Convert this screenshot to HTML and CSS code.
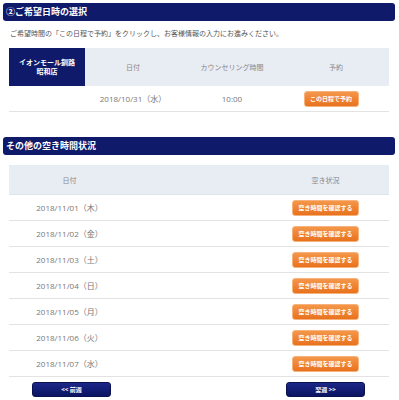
FILE: index.html
```html
<!DOCTYPE html>
<html lang="ja">
    <head>
        <meta charset="UTF-8">
        <meta name="viewport" content="width=device-width, initial-scale=1.0">
        <title>ご希望日時の選択</title>
        <link rel="stylesheet" href="styles.css">
    </head>

    <body>
        <div class="page">
            <h2 class="section-title">②ご希望日時の選択</h2>
            <p class="intro">ご希望時間の「この日程で予約」をクリックし、お客様情報の入力にお進みください。</p>

            <div class="slot-table">
                <div class="cell shop">イオンモール釧路<br>昭和店</div>
                <div class="cell head">日付</div>
                <div class="cell head">カウンセリング時間</div>
                <div class="cell head">予約</div>

                <div class="cell data"></div>
                <div class="cell data">2018/10/31（水）</div>
                <div class="cell data">10:00</div>
                <div class="cell data"><button class="btn-orange btn-reserve">この日程で予約</button></div>
            </div>

            <h2 class="section-title second">その他の空き時間状況</h2>

            <div class="other-table" id="otherTable">
                <div class="cell head">日付</div>
                <div class="cell head"></div>
                <div class="cell head">空き状況</div>
            </div>

            <div class="pager">
                <button class="btn-navy">&lt;&lt; 前週</button>
                <button class="btn-navy">翌週 &gt;&gt;</button>
            </div>
        </div>

        <script>
        var days = ["2018/11/01（木）", "2018/11/02（金）", "2018/11/03（土）", "2018/11/04（日）",
                    "2018/11/05（月）", "2018/11/06（火）", "2018/11/07（水）"];
        var table = document.getElementById("otherTable");

        for (var i = 0; i < days.length; i++) {
            table.innerHTML += '<div class="cell data">' + days[i] + '</div>' +
                '<div class="cell data"></div>' +
                '<div class="cell data"><button class="btn-orange btn-check">空き時間を確認する</button></div>';
        }
        </script>
    </body>
</html>
```

FILE: styles.css
```css
body{
    margin: 0;
    background: #ffffff;
    font-family: "Open Sans", "Noto Sans CJK JP", sans-serif;
}

.page{
    width: 392px;
    padding: 3px 0 0 3px;
}

.section-title{
    margin: 0;
    height: 18px;
    line-height: 18px;
    padding-left: 3px;
    font-size: 9px;
    font-weight: bold;
    color: #ffffff;
    background-color: #0f1a6b;
    border-radius: 3px;
}

.section-title.second{
    margin-top: 25px;
}

.intro{
    margin: 8px 0 0 7px;
    font-size: 7px;
    line-height: 9px;
    color: #555555;
}

.slot-table{
    margin: 10px 6px 0 6px;
    display: grid;
    grid-template-columns: 76px 96px 102px 1fr;
}

.other-table{
    margin: 10px 6px 0 6px;
    display: grid;
    grid-template-columns: 121px 1fr 127px;
}

.cell{
    display: flex;
    align-items: center;
    justify-content: center;
    text-align: center;
}

.head{
    background-color: #e8ecf3;
    font-size: 7px;
    color: #888888;
}

.slot-table .head,
.slot-table .shop{
    height: 38px;
}

.other-table .head{
    height: 30px;
    border-bottom: 1px solid #dfe3ea;
    box-sizing: border-box;
}

.shop{
    background-color: #0f1a6b;
    color: #ffffff;
    font-size: 7px;
    font-weight: bold;
    line-height: 9px;
}

.data{
    height: 25px;
    border-bottom: 1px solid #e3e3e3;
    font-size: 8px;
    color: #777777;
}

.btn-orange{
    height: 16px;
    padding: 0;
    border: 1px solid #f6b27a;
    border-radius: 3px;
    background: linear-gradient(#f4974a, #e8721e);
    color: #ffffff;
    font-family: "Noto Sans CJK JP", sans-serif;
    font-size: 6px;
    font-weight: bold;
    cursor: pointer;
}

.btn-reserve{
    width: 55px;
    margin-right: 10px;
}

.btn-check{
    width: 67px;
}

.pager{
    display: flex;
    justify-content: space-between;
    margin: 5px 30px 0 29px;
}

.btn-navy{
    width: 79px;
    height: 15px;
    padding: 0;
    border: 1px solid #0a1150;
    border-radius: 3px;
    background: linear-gradient(#1c2788, #0b1462);
    color: #ffffff;
    font-family: "Noto Sans CJK JP", sans-serif;
    font-size: 6px;
    font-weight: bold;
    cursor: pointer;
}
```
